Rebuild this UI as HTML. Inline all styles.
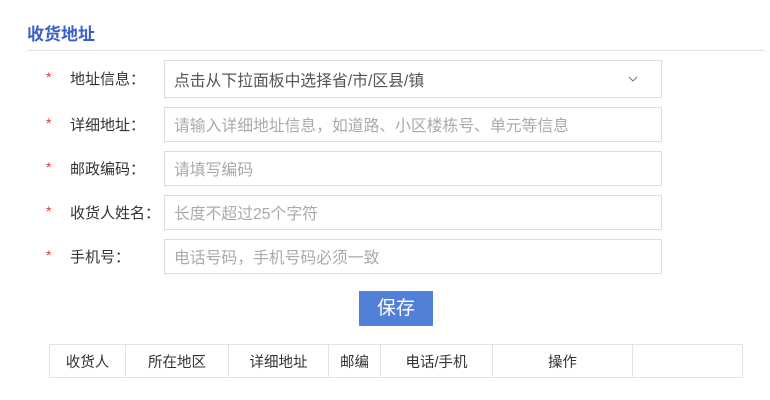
<!DOCTYPE html>
<html><head><meta charset="utf-8"><style>
body{margin:0;width:770px;height:400px;background:#fff;font-family:"Liberation Sans","Noto Sans CJK SC",sans-serif;position:relative;overflow:hidden}
.t{position:absolute;left:27px;top:20px;font-size:17px;font-weight:bold;color:#3b5fc8}
.hr{position:absolute;left:27px;top:50px;width:738px;height:1px;background:#e3e3e3}
.s{position:absolute;left:46px;color:#e33;font-size:14px}
.l{position:absolute;left:70px;font-size:15px;color:#333}
.i{position:absolute;left:164px;width:498px;border:1px solid #dcdcdc;box-sizing:border-box;font-size:15.8px;color:#aaa;padding-left:9px;display:flex;align-items:center}
.btn{position:absolute;left:359px;top:291px;width:74px;height:35px;background:#527fd8;color:#fff;font-size:19px;text-align:center;line-height:35px}
table{position:absolute;left:49px;top:344px;width:694px;height:34px;border-collapse:collapse;font-size:14.5px;color:#333}
td{border:1px solid #e3e3e3;text-align:center;padding:0}
</style></head><body>
<div class="t">收货地址</div><div class="hr"></div>
<div class="s" style="top:69px">*</div><div class="l" style="top:68px">地址信息：</div>
<div class="i" style="top:60px;height:38px;color:#555">点击从下拉面板中选择省/市/区县/镇
<svg style="position:absolute;left:463px;top:15px" width="10" height="6"><path d="M1 1L5 5L9 1" stroke="#777" fill="none"/></svg></div>
<div class="s" style="top:115px">*</div><div class="l" style="top:114px">详细地址：</div>
<div class="i" style="top:107px;height:35px">请输入详细地址信息，如道路、小区楼栋号、单元等信息</div>
<div class="s" style="top:159px">*</div><div class="l" style="top:158px">邮政编码：</div>
<div class="i" style="top:151px;height:35px">请填写编码</div>
<div class="s" style="top:203px">*</div><div class="l" style="top:202px">收货人姓名：</div>
<div class="i" style="top:195px;height:35px">长度不超过25个字符</div>
<div class="s" style="top:247px">*</div><div class="l" style="top:246px">手机号：</div>
<div class="i" style="top:239px;height:35px">电话号码，手机号码必须一致</div>
<div class="btn">保存</div>
<table><tr><td style="width:75px">收货人</td><td style="width:102px">所在地区</td><td style="width:99px">详细地址</td><td style="width:51px">邮编</td><td style="width:111px">电话/手机</td><td style="width:139px">操作</td><td></td></tr></table>
</body></html>
